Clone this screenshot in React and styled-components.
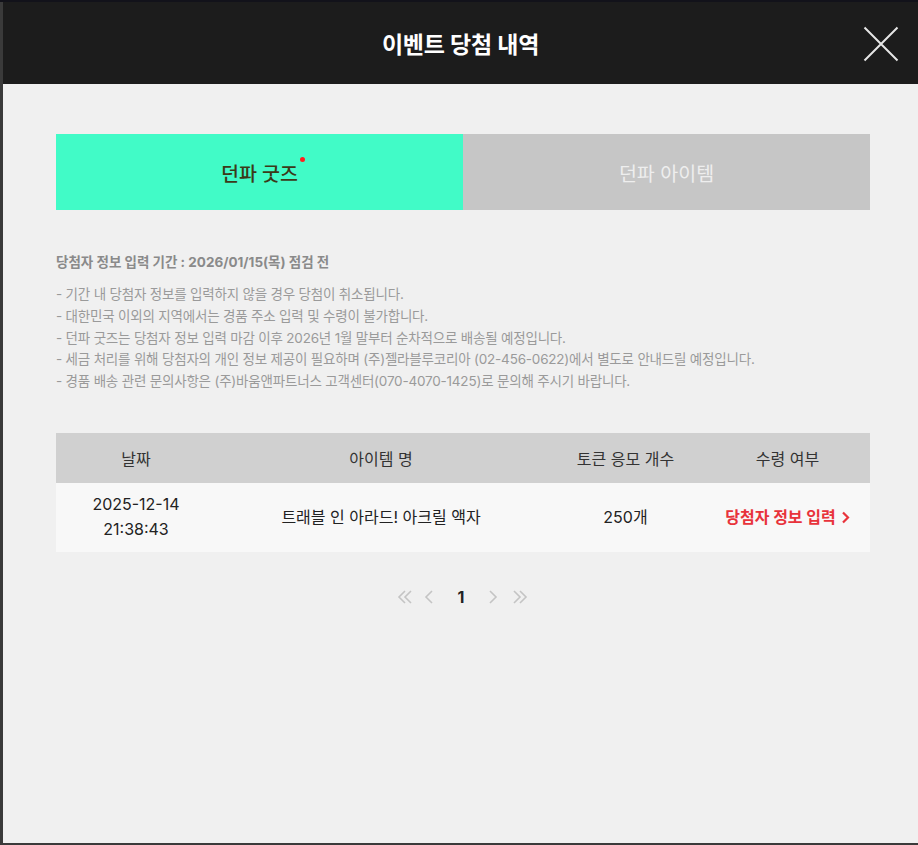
import React from "react";
import styled, { createGlobalStyle } from "styled-components";

const GlobalStyle = createGlobalStyle`
  html, body {
    margin: 0;
    padding: 0;
    background: #3c3c3c;
  }
  body {
    font-family: Inter, "Noto Sans CJK KR", "Noto Sans", sans-serif;
  }
`;

const Backdrop = styled.div`
  width: 918px;
  height: 845px;
  box-sizing: border-box;
  padding: 2px 0 2px 3px;
  background: linear-gradient(#12121a 0 2px, #3a3a3a 2px);
  display: flex;
`;

const Modal = styled.div`
  flex: 1;
  display: flex;
  flex-direction: column;
  background: #f0f0f0;
`;

const Header = styled.div`
  height: 82px;
  flex-shrink: 0;
  background: #1c1c1c;
  position: relative;
  display: flex;
  align-items: center;
  justify-content: center;
`;

const Title = styled.h1`
  margin: 0;
  color: #fff;
  font-size: 23px;
  font-weight: 700;
  letter-spacing: -0.2px;
`;

const Close = styled.button`
  position: absolute;
  right: 19px;
  top: 24px;
  width: 36px;
  height: 36px;
  padding: 0;
  border: 0;
  background: none;
  cursor: pointer;
`;

const Body = styled.div`
  padding: 50px 48px 0 53px;
`;

const Tabs = styled.div`
  display: grid;
  grid-template-columns: 1fr 1fr;
  height: 76px;
`;

const Tab = styled.div`
  display: flex;
  align-items: center;
  justify-content: center;
  font-size: 19.5px;
  font-weight: ${(p) => (p.$active ? 500 : 400)};
  background: ${(p) => (p.$active ? "#41fbc7" : "#c6c6c6")};
  color: ${(p) => (p.$active ? "#3b3a18" : "#eeeeee")};
`;

const TabLabel = styled.span`
  position: relative;
`;

const Dot = styled.i`
  position: absolute;
  right: -7px;
  top: -1px;
  width: 5px;
  height: 5px;
  border-radius: 50%;
  background: #ff1f1f;
`;

const Notice = styled.div`
  margin-top: 41px;
`;

const NoticeTitle = styled.p`
  margin: 0 0 13px;
  font-size: 13.5px;
  font-weight: 700;
  color: #8a8a8a;
`;

const NoticeList = styled.ul`
  list-style: none;
  margin: 0;
  padding: 0;
  font-size: 13.5px;
  line-height: 21.8px;
  color: #9a9a9a;
  letter-spacing: -0.2px;
`;

const Table = styled.div`
  margin-top: 40px;
  display: grid;
  grid-template-columns: 160px 330px 159px 1fr;
`;

const HeadCell = styled.div`
  height: 50px;
  display: flex;
  align-items: center;
  justify-content: center;
  background: #d0d0d0;
  font-size: 16px;
  color: #333;
`;

const Cell = styled.div`
  height: 69px;
  display: flex;
  align-items: center;
  justify-content: center;
  text-align: center;
  background: #f8f8f8;
  font-size: 16px;
  line-height: 25px;
  color: #222;
`;

const EntryLink = styled.a`
  display: flex;
  align-items: center;
  gap: 5px;
  color: #e8333b;
  font-weight: 700;
  font-size: 16px;
  text-decoration: none;
  cursor: pointer;
`;

const Pager = styled.div`
  margin-top: 33px;
  display: flex;
  justify-content: center;
  align-items: center;
  padding-left: 2px;
`;

const PageArrow = styled.span`
  display: flex;
  align-items: center;
  justify-content: center;
  width: ${(p) => p.$w || 24}px;
  height: 24px;
`;

const PageNum = styled.span`
  width: 40px;
  text-align: center;
  font-size: 16px;
  font-weight: 700;
  color: #222;
`;

const Chev = ({ dir = "right", double }) => {
  const flip = dir === "left" ? "scale(-1,1) translate(-20,0)" : undefined;
  return (
    <svg width="20" height="20" viewBox="0 0 20 20" fill="none" stroke="#c4c4c4" strokeWidth="1.6">
      <g transform={flip}>
        {double ? (
          <>
            <path d="M4 4l6 6-6 6" />
            <path d="M10 4l6 6-6 6" />
          </>
        ) : (
          <path d="M7 4l6 6-6 6" />
        )}
      </g>
    </svg>
  );
};

const notes = [
  "- 기간 내 당첨자 정보를 입력하지 않을 경우 당첨이 취소됩니다.",
  "- 대한민국 이외의 지역에서는 경품 주소 입력 및 수령이 불가합니다.",
  "- 던파 굿즈는 당첨자 정보 입력 마감 이후 2026년 1월 말부터 순차적으로 배송될 예정입니다.",
  "- 세금 처리를 위해 당첨자의 개인 정보 제공이 필요하며 (주)젤라블루코리아 (02-456-0622)에서 별도로 안내드릴 예정입니다.",
  "- 경품 배송 관련 문의사항은 (주)바움앤파트너스 고객센터(070-4070-1425)로 문의해 주시기 바랍니다.",
];

export default function App() {
  return (
    <>
      <GlobalStyle />
      <Backdrop>
        <Modal>
          <Header>
            <Title>이벤트 당첨 내역</Title>
            <Close aria-label="close">
              <svg width="36" height="36" viewBox="0 0 36 36" stroke="#e6e6e6" strokeWidth="2">
                <path d="M1.5 1.5l33 33M34.5 1.5l-33 33" />
              </svg>
            </Close>
          </Header>
          <Body>
            <Tabs>
              <Tab $active>
                <TabLabel>
                  던파 굿즈
                  <Dot />
                </TabLabel>
              </Tab>
              <Tab>던파 아이템</Tab>
            </Tabs>

            <Notice>
              <NoticeTitle>당첨자 정보 입력 기간 : 2026/01/15(목) 점검 전</NoticeTitle>
              <NoticeList>
                {notes.map((n) => (
                  <li key={n}>{n}</li>
                ))}
              </NoticeList>
            </Notice>

            <Table>
              <HeadCell>날짜</HeadCell>
              <HeadCell>아이템 명</HeadCell>
              <HeadCell>토큰 응모 개수</HeadCell>
              <HeadCell>수령 여부</HeadCell>
              <Cell>
                2025-12-14
                <br />
                21:38:43
              </Cell>
              <Cell>트래블 인 아라드! 아크릴 액자</Cell>
              <Cell>250개</Cell>
              <Cell>
                <EntryLink>
                  당첨자 정보 입력
                  <svg width="9" height="13" viewBox="0 0 9 13" fill="none" stroke="#e8333b" strokeWidth="2.2">
                    <path d="M2 1.5l5 5-5 5" />
                  </svg>
                </EntryLink>
              </Cell>
            </Table>

            <Pager>
              <PageArrow>
                <Chev dir="left" double />
              </PageArrow>
              <PageArrow>
                <Chev dir="left" />
              </PageArrow>
              <PageNum>1</PageNum>
              <PageArrow>
                <Chev />
              </PageArrow>
              <PageArrow $w={30}>
                <Chev double />
              </PageArrow>
            </Pager>
          </Body>
        </Modal>
      </Backdrop>
    </>
  );
}
